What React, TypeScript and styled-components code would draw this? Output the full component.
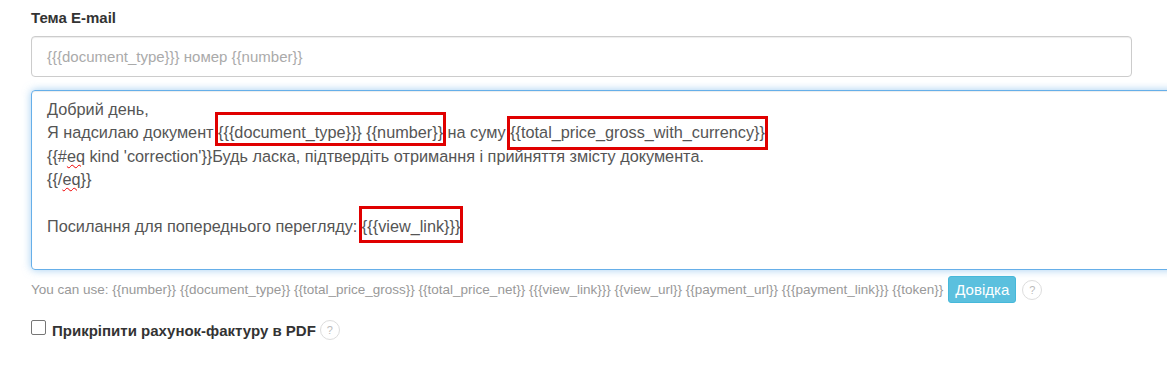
import React from 'react'
import styled, { createGlobalStyle } from 'styled-components'

const GlobalStyle = createGlobalStyle`
    html, body {
        margin: 0;
        padding: 0;
        background: #fff;
        overflow: hidden;
    }
    body {
        font-family: "Liberation Sans", Arial, sans-serif;
        color: #333;
    }
`

const Page = styled.div`
    width: 1167px;
    height: 375px;
    padding: 8px 0 0 31px;
    box-sizing: border-box;
    overflow: hidden;
`

const Label = styled.div`
    font-size: 15px;
    font-weight: bold;
    color: #333;
    line-height: 20px;
    margin-bottom: 8px;
`

const Input = styled.div`
    width: 1101px;
    height: 41px;
    box-sizing: border-box;
    border: 1px solid #ccc;
    border-radius: 4px;
    padding: 0 15px;
    display: flex;
    align-items: center;
    font-size: 15px;
    color: #aaa;
    box-shadow: inset 0 1px 1px rgba(0, 0, 0, 0.075);
`

const Editor = styled.div`
    margin-top: 13px;
    width: 1160px;
    height: 180px;
    box-sizing: border-box;
    border: 1px solid #66afe9;
    border-radius: 4px;
    padding: 7px 15px;
    font-size: 16.25px;
    line-height: 23.4px;
    color: #555;
    box-shadow: inset 0 1px 1px rgba(0, 0, 0, 0.075), 0 0 8px rgba(102, 175, 233, 0.6);
`

const Line = styled.div`
    white-space: pre;
    min-height: 23.4px;
`

const Marked = styled.span<{ $top: number; $bottom: number }>`
    position: relative;
    &::after {
        content: '';
        position: absolute;
        left: -3px;
        right: -3px;
        top: ${p => p.$top}px;
        bottom: ${p => p.$bottom}px;
        border: 3px solid #e00000;
        pointer-events: none;
    }
`

const Misspelled = styled.span`
    text-decoration: underline wavy #e00;
    text-decoration-thickness: 1px;
    text-underline-offset: 2px;
`

const HelpRow = styled.div`
    margin-top: 6px;
    display: flex;
    align-items: center;
    gap: 4px;
    font-size: 13.5px;
    color: #999;
    white-space: nowrap;
`

const InfoButton = styled.button`
    background: #5bc0de;
    border: 1px solid #46b8da;
    border-radius: 3px;
    color: #fff;
    font-family: inherit;
    font-size: 15px;
    height: 27px;
    padding: 0 6px;
    margin-left: 1px;
`

const Hint = styled.span<{ $gap: number }>`
    display: inline-flex;
    align-items: center;
    justify-content: center;
    width: 18px;
    height: 18px;
    border: 1px solid #ddd;
    border-radius: 50%;
    font-size: 11px;
    font-weight: normal;
    color: #bbb;
    margin-left: ${p => p.$gap}px;
`

const CheckRow = styled.label`
    margin-top: 17px;
    display: flex;
    align-items: center;
    gap: 4px;
    font-size: 15px;
    font-weight: bold;
    color: #333;
`

const Check = styled.span`
    width: 13px;
    height: 13px;
    border: 1px solid #767676;
    border-radius: 2px;
    margin: -6px 2px 0 0;
`

export default function App() {
    return (
        <Page>
            <GlobalStyle />
            <Label>Тема E-mail</Label>
            <Input>{'{{{document_type}}} номер {{number}}'}</Input>
            <Editor>
                <Line>Добрий день,</Line>
                <Line>
                    {'Я надсилаю документ '}
                    <Marked $top={-11} $bottom={-5}>{'{{{document_type}}} {{number}}'}</Marked>
                    {' на суму '}
                    <Marked $top={-7} $bottom={-9}>{'{{total_price_gross_with_currency}}'}</Marked>
                </Line>
                <Line>
                    {'{{#'}<Misspelled>eq</Misspelled>{" kind 'correction'}}Будь ласка, підтвердіть отримання і прийняття змісту документа."}
                </Line>
                <Line>
                    {'{{/'}<Misspelled>eq</Misspelled>{'}}'}
                </Line>
                <Line> </Line>
                <Line>
                    {'Посилання для попереднього перегляду: '}
                    <Marked $top={-11} $bottom={-8}>{'{{{view_link}}}'}</Marked>
                </Line>
            </Editor>
            <HelpRow>
                <span>
                    {'You can use: {{number}} {{document_type}} {{total_price_gross}} {{total_price_net}} {{{view_link}}} {{view_url}} {{payment_url}} {{{payment_link}}} {{token}}'}
                </span>
                <InfoButton>Довідка</InfoButton>
                <Hint $gap={2}>?</Hint>
            </HelpRow>
            <CheckRow>
                <Check />
                <span>Прикріпити рахунок-фактуру в PDF</span>
                <Hint $gap={0}>?</Hint>
            </CheckRow>
        </Page>
    )
}
